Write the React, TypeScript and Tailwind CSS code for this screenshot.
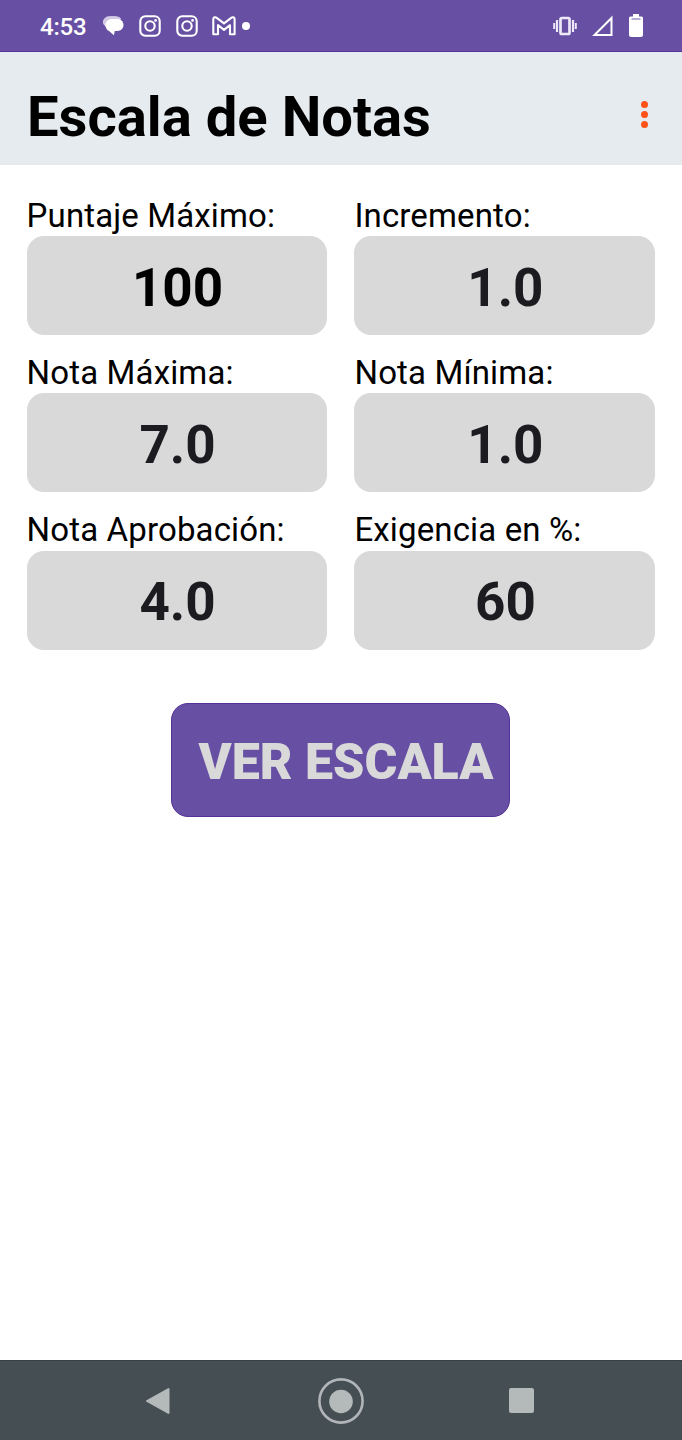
import type { ReactNode } from "react";

type FieldProps = { label: string; value: string; strong?: boolean };

const fields: FieldProps[] = [
  { label: "Puntaje Máximo:", value: "100", strong: true },
  { label: "Incremento:", value: "1.0" },
  { label: "Nota Máxima:", value: "7.0" },
  { label: "Nota Mínima:", value: "1.0" },
  { label: "Nota Aprobación:", value: "4.0" },
  { label: "Exigencia en %:", value: "60" },
];

function Field({ label, value, strong }: FieldProps) {
  return (
    <div className="flex flex-col">
      <span className="flex h-[39.5px] items-center whitespace-nowrap pb-[1.200px] text-[33px] leading-[36px] font-normal tracking-[0.14px] text-black">
        {label}
      </span>
      <div
        className={`flex h-[99px] items-center justify-center rounded-[17px] bg-[#d9d9d9] pt-[5px] pl-px text-[53px] leading-none font-bold ${
          strong ? "text-black" : "text-[#1c1b1f]"
        }`}
      >
        {value}
      </div>
    </div>
  );
}

function InstagramIcon({ className }: { className: string }) {
  return (
    <svg className={className} width="22" height="22" viewBox="0 0 22 22" fill="none" stroke="#fff" strokeWidth="2.100">
      <rect x="1.3" y="1.3" width="19.4" height="19.4" rx="5" />
      <circle cx="11" cy="11" r="4.7" />
      <circle cx="16.6" cy="5.4" r="1.4" fill="#fff" stroke="none" />
    </svg>
  );
}

function StatusBar() {
  return (
    <header className="flex h-[52px] items-center border-b border-[#55319a] bg-[#6750a3] pl-10 text-white">
      <span className="w-[46px] whitespace-nowrap pt-[2px] text-[24px] leading-none font-medium tracking-[-0.2px]">4:53</span>
      <svg className="ml-[17px] mt-[1px]" width="21" height="20" viewBox="0 0 21 20">
        <path d="M3.500 10.500C1.500 9.500.5 8 .5 6 .5 3 3 .7 6.500.7H12c3 0 5 1 6 2.500" fill="#cfc6e4" stroke="#fff" strokeWidth="0.700" />
        <path
          d="M9.200 2.900h5c3.800 0 6.300 2.600 6.300 6s-2.500 5.800-6.100 6h-2.600l-.9 4.300L6 15.100C3.500 13.600 2.500 11.300 2.500 8.900c0-3.400 2.700-6 6.700-6Z"
          fill="#fff"
        />
      </svg>
      <InstagramIcon className="ml-[15px]" />
      <InstagramIcon className="ml-[15px]" />
      <svg className="ml-[14px]" width="24" height="20" viewBox="0 0 24 20" fill="none" stroke="#fff" strokeWidth="2.100" strokeLinejoin="round">
        <path d="M1.300 3.200c0-2 2-2.500 3.400-1.400L12 7.400l7.200-5.600c1.400-1.100 3.400-.6 3.400 1.400v15H18V9.200L12 13.800 6 9.200v9H1.300v-15Z" />
      </svg>
      <span className="ml-[6px] size-2 rounded-full bg-white" />

      <svg className="ml-auto" width="24" height="20" viewBox="0 0 24 20" fill="none" stroke="#eee9f7">
        <rect x="7.500" y="2" width="9" height="16" rx="1.200" strokeWidth="2.700" />
        <path d="M4 4v12M20 4v12" strokeWidth="2.200" />
        <path d="M1.200 7v6M22.800 7v6" strokeWidth="2" />
      </svg>
      <svg className="ml-[15px]" width="22" height="22" viewBox="0 0 22 22" fill="none" stroke="#fff" strokeWidth="2">
        <path d="M2.500 20H19.500V3Z" />
      </svg>
      <svg className="mr-[39px] ml-[15px]" width="14" height="23" viewBox="0 0 14 23">
        <path d="M4 0h6v2.500h2.500q1.500 0 1.500 1.500v17q0 2-2 2H2q-2 0-2-2V4q0-1.500 1.500-1.500H4Z" fill="#fff" />
        <path d="M2.500 5h9" stroke="#8875b7" strokeWidth="1.200" />
      </svg>
    </header>
  );
}

function NavButton({ label, children }: { label: string; children: ReactNode }) {
  return (
    <button type="button" aria-label={label} className="flex w-[180.500px] items-center justify-center">
      {children}
    </button>
  );
}

export default function App() {
  return (
    <div className="flex h-[1440px] w-[682px] flex-col overflow-hidden bg-white font-['Roboto',sans-serif]">
      <StatusBar />
      <div className="flex h-[113px] items-center justify-between bg-[#e6ebef] pr-[34px] pl-[27px]">
        <h1 className="whitespace-nowrap pt-[18px] text-[56.200px] leading-none font-bold text-black">Escala de Notas</h1>
        <div className="flex flex-col gap-[3px] pt-[12px]">
          <span className="size-[7px] rounded-full bg-[#ff5218]" />
          <span className="size-[7px] rounded-full bg-[#ff5218]" />
          <span className="size-[7px] rounded-full bg-[#ff5218]" />
        </div>
      </div>

      <main className="flex flex-1 flex-col items-center pt-[31.500px] pr-[26.700px] pl-[26.600px]">
        <div className="grid w-full grid-cols-2 gap-x-[27px] gap-y-[18.900px]">
          {fields.map((field) => (
            <Field key={field.label} {...field} />
          ))}
        </div>
        <button
          type="button"
          className="mt-[53px] flex h-[114.500px] w-[339px] items-center justify-center rounded-[17px] border border-[#55319a] bg-[#6750a3] pt-[5px] pl-[10px] text-[50.200px] leading-none font-black whitespace-nowrap text-[#d9d9d9]"
        >
          VER ESCALA
        </button>
      </main>

      <nav className="flex h-[80px] items-center justify-center border-t border-[#354146] bg-[#454e53]">
        <NavButton label="Atrás">
          <svg className="mr-[6px]" width="26" height="28" viewBox="0 0 26 28">
            <path d="M2 14 23.500 2v24Z" fill="#b4b9ba" stroke="#b4b9ba" strokeWidth="2" strokeLinejoin="round" />
          </svg>
        </NavButton>
        <NavButton label="Inicio">
          <svg width="48" height="48" viewBox="0 0 48 48">
            <circle cx="24" cy="24" r="21.600" fill="none" stroke="#b1b5b8" strokeWidth="2.600" />
            <circle cx="24" cy="24.500" r="11.800" fill="#b4b9ba" />
          </svg>
        </NavButton>
        <NavButton label="Recientes">
          <span className="size-[25px] rounded-[2px] bg-[#b4b9ba]" />
        </NavButton>
      </nav>
    </div>
  );
}
